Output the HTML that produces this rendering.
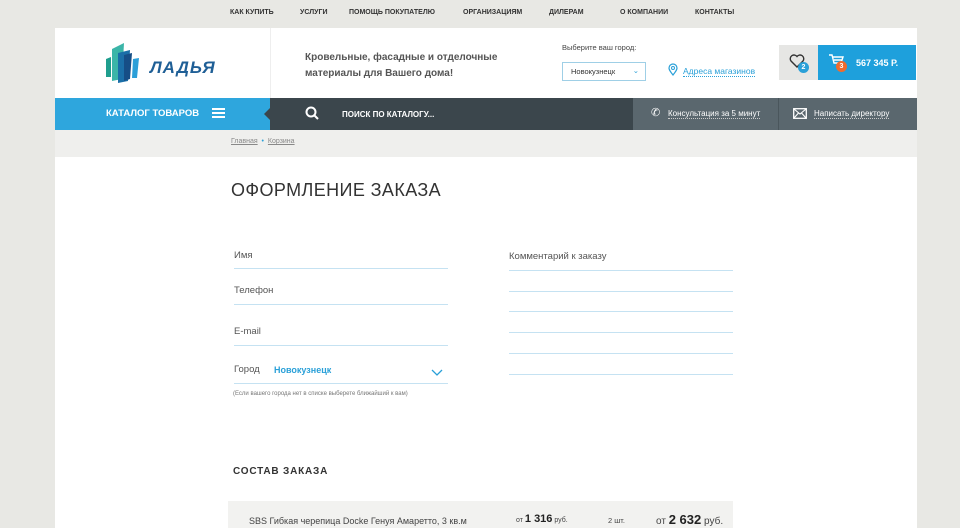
<!DOCTYPE html>
<html><head><meta charset="utf-8"><style>
*{margin:0;padding:0;box-sizing:border-box}
body{width:960px;height:528px;overflow:hidden;background:#e8e8e4;font-family:"Liberation Sans",sans-serif;color:#444;position:relative}
.a{position:absolute}
.top a{position:absolute;top:9px;font-size:7px;font-weight:bold;color:#333}
.line{position:absolute;height:1px;background:#c5e2f2}
.lbl{position:absolute;font-size:9.5px;color:#555}
</style></head><body>
<div class="top">
<a style="left:230px">КАК КУПИТЬ</a><a style="left:300px">УСЛУГИ</a><a style="left:349px">ПОМОЩЬ ПОКУПАТЕЛЮ</a><a style="left:463px">ОРГАНИЗАЦИЯМ</a><a style="left:549px">ДИЛЕРАМ</a><a style="left:620px">О КОМПАНИИ</a><a style="left:695px">КОНТАКТЫ</a>
</div>
<div class="a" style="left:55px;top:28px;width:862px;height:500px;background:#fff"></div>
<div class="a" style="left:270px;top:28px;width:1px;height:70px;background:#eee"></div>
<svg class="a" style="left:104px;top:41px" width="36" height="44" viewBox="0 0 36 44">
<path d="M2 18 L7 16 L7 36 L2 36Z" fill="#1f9e8e"/>
<path d="M8 8 L20 2 L18 38 L8 40Z" fill="#3bb5a8"/>
<path d="M14 12 L26 9 L24 40 L14 42Z" fill="#1b6fa8"/>
<path d="M20 14 L28 12 L26 38 L20 40Z" fill="#164e86"/>
<path d="M29 18 L35 17 L33 37 L28 37Z" fill="#2b9fd8"/>
</svg>
<div class="a" style="left:150px;top:58px;font-size:17px;font-weight:bold;font-style:italic;color:#1f5f96;letter-spacing:1px">ЛАДЬЯ</div>
<div class="a" style="left:305px;top:50px;font-size:10px;font-weight:bold;color:#555;line-height:16px">Кровельные, фасадные и отделочные<br>материалы для Вашего дома!</div>
<div class="a" style="left:562px;top:43px;font-size:7.5px;color:#444">Выберите ваш город:</div>
<div class="a" style="left:562px;top:62px;width:84px;height:19px;border:1px solid #9fcfe6;font-size:7.5px;color:#333;padding:4px 0 0 8px">Новокузнецк<span style="position:absolute;right:6px;top:3px;color:#2aa0d8">⌄</span></div>
<svg class="a" style="left:668px;top:63px" width="10" height="13" viewBox="0 0 10 13"><path d="M5 12 C1 7 1 6 1 5 A4 4 0 0 1 9 5 C9 6 9 7 5 12Z" fill="none" stroke="#2aa0d8" stroke-width="1.2"/><circle cx="5" cy="5" r="1.5" fill="none" stroke="#2aa0d8"/></svg>
<div class="a" style="left:683px;top:66px;font-size:8.5px;color:#2aa0d8;border-bottom:1px dotted #2aa0d8">Адреса магазинов</div>
<div class="a" style="left:779px;top:45px;width:39px;height:35px;background:#e6e6e4"></div>
<svg class="a" style="left:789px;top:54px" width="16" height="14" viewBox="0 0 16 14"><path d="M8 13 L2 7 A3.5 3.5 0 0 1 8 2.5 A3.5 3.5 0 0 1 14 7Z" fill="none" stroke="#333" stroke-width="1.4"/></svg>
<div class="a" style="left:798px;top:62px;width:11px;height:11px;border-radius:50%;background:#2aa0d8;color:#fff;font-size:7px;font-weight:bold;text-align:center;line-height:11px">2</div>
<div class="a" style="left:818px;top:45px;width:98px;height:35px;background:#1ea0dc"></div>
<svg class="a" style="left:828px;top:54px" width="16" height="14" viewBox="0 0 16 14"><path d="M1 1 H4 L6 9 H13 L15 3 H5 M6 6 H14" fill="none" stroke="#fff" stroke-width="1.4"/></svg>
<div class="a" style="left:836px;top:61px;width:11px;height:11px;border-radius:50%;background:#ef6b2e;color:#fff;font-size:7px;font-weight:bold;text-align:center;line-height:11px">3</div>
<div class="a" style="left:856px;top:58px;font-size:9px;font-weight:bold;color:#fff">567 345 Р.</div>
<div class="a" style="left:55px;top:98px;width:215px;height:32px;background:#2ea6dd"></div>
<div class="a" style="left:106px;top:108px;font-size:9.5px;font-weight:bold;color:#fff">КАТАЛОГ ТОВАРОВ</div>
<div class="a" style="left:212px;top:108px;width:13px;height:2px;background:#fff;box-shadow:0 4px #fff,0 8px #fff"></div>
<div class="a" style="left:270px;top:98px;width:363px;height:32px;background:#3b464c"></div>
<div class="a" style="left:264px;top:108px;width:0;height:0;border-top:6px solid transparent;border-bottom:6px solid transparent;border-right:6px solid #3b464c"></div>
<svg class="a" style="left:305px;top:106px" width="14" height="14" viewBox="0 0 14 14"><circle cx="6" cy="6" r="4.5" fill="none" stroke="#fff" stroke-width="2"/><path d="M9.5 9.5 L13 13" stroke="#fff" stroke-width="2"/></svg>
<div class="a" style="left:342px;top:110px;font-size:8px;font-weight:bold;color:#fff">ПОИСК ПО КАТАЛОГУ...</div>
<div class="a" style="left:633px;top:98px;width:284px;height:32px;background:#5a676e"></div>
<div class="a" style="left:778px;top:98px;width:1px;height:32px;background:#4a565c"></div>
<div class="a" style="left:651px;top:106px;font-size:11px;color:#fff">✆</div>
<div class="a" style="left:668px;top:109px;font-size:8px;color:#fff;border-bottom:1px dotted #ccc">Консультация за 5 минут</div>
<svg class="a" style="left:793px;top:108px" width="14" height="11" viewBox="0 0 14 11"><rect x="0.7" y="0.7" width="12.6" height="9.6" fill="none" stroke="#fff" stroke-width="1.3"/><path d="M1 1 L7 6 L13 1 M1 10 L5.5 5 M13 10 L8.5 5" fill="none" stroke="#fff" stroke-width="1.1"/></svg>
<div class="a" style="left:814px;top:109px;font-size:8px;color:#fff;border-bottom:1px dotted #ccc">Написать директору</div>
<div class="a" style="left:55px;top:130px;width:862px;height:27px;background:#efefed"></div>
<div class="a" style="left:231px;top:138px;font-size:7px;color:#888"><u>Главная</u> <span style="color:#2aa0d8">&nbsp;•&nbsp;</span> <u>Корзина</u></div>
<div class="a" style="left:231px;top:180px;font-size:18px;color:#333;letter-spacing:.4px">ОФОРМЛЕНИЕ ЗАКАЗА</div>
<div class="lbl" style="left:234px;top:250px">Имя</div><div class="line" style="left:234px;top:268px;width:214px"></div>
<div class="lbl" style="left:234px;top:285px">Телефон</div><div class="line" style="left:234px;top:304px;width:214px"></div>
<div class="lbl" style="left:234px;top:326px">E-mail</div><div class="line" style="left:234px;top:345px;width:214px"></div>
<div class="lbl" style="left:234px;top:364px">Город</div>
<div class="a" style="left:274px;top:365px;font-size:9px;font-weight:bold;color:#2aa0d8">Новокузнецк</div>
<svg class="a" style="left:431px;top:369px" width="12" height="7" viewBox="0 0 12 7"><path d="M1 1 L6 6 L11 1" fill="none" stroke="#2aa0d8" stroke-width="1.3"/></svg>
<div class="line" style="left:234px;top:383px;width:214px"></div>
<div class="a" style="left:233px;top:391px;font-size:6px;color:#777">(Если вашего города нет в списке выберете ближайший к вам)</div>
<div class="lbl" style="left:509px;top:251px">Комментарий к заказу</div>
<div class="line" style="left:509px;top:270px;width:224px"></div>
<div class="line" style="left:509px;top:291px;width:224px"></div>
<div class="line" style="left:509px;top:311px;width:224px"></div>
<div class="line" style="left:509px;top:332px;width:224px"></div>
<div class="line" style="left:509px;top:353px;width:224px"></div>
<div class="line" style="left:509px;top:374px;width:224px"></div>
<div class="a" style="left:233px;top:466px;font-size:10px;font-weight:bold;color:#333;letter-spacing:.8px">СОСТАВ ЗАКАЗА</div>
<div class="a" style="left:228px;top:501px;width:505px;height:27px;background:#f2f2f0"></div>
<div class="a" style="left:249px;top:516px;font-size:9px;color:#444">SBS Гибкая черепица Docke Генуя Амаретто, 3 кв.м</div>
<div class="a" style="left:516px;top:513px;font-size:7px;color:#444">от <b style="font-size:11px;color:#222">1 316</b> руб.</div>
<div class="a" style="left:608px;top:516px;font-size:7.5px;color:#444">2 шт.</div>
<div class="a" style="left:656px;top:512px;font-size:10px;color:#444">от <b style="font-size:13px;color:#222">2 632</b> руб.</div>
</body></html>
